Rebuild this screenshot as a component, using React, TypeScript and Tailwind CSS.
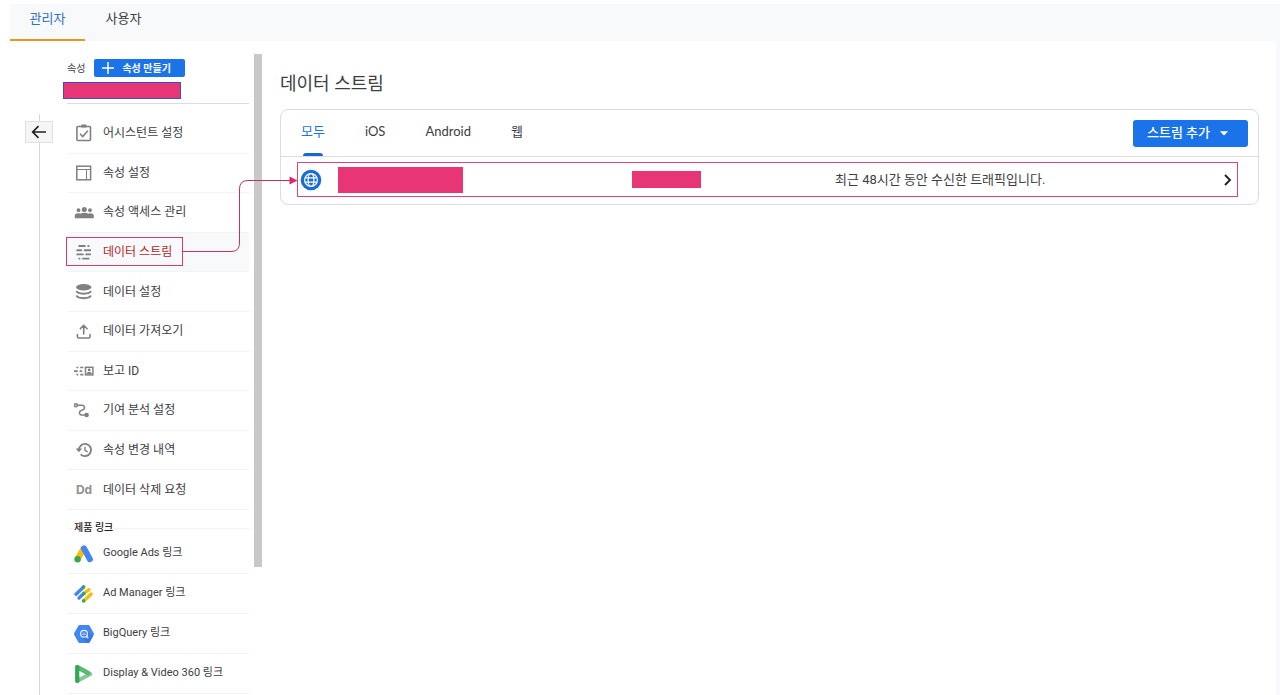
import type { ReactNode } from 'react';
import { MdArrowDropDown } from 'react-icons/md';

const icon = 'block h-5 w-5';

function AssistantIcon() {
  return (
    <svg viewBox="0 0 20 20" className={icon} fill="none" stroke="currentColor" strokeWidth="1.6">
      <rect x="2.9" y="3.5" width="13.6" height="14" rx="1" />
      <path d="M7.2 3h5.2" strokeWidth="3" />
      <path d="M6 10.8l2.7 2.7 5.2-5.7" />
    </svg>
  );
}

function LayoutIcon() {
  return (
    <svg viewBox="0 0 20 20" className={icon} fill="none" stroke="currentColor">
      <rect x="2.8" y="3.2" width="13.8" height="13.6" strokeWidth="1.5" />
      <path d="M3 6.5h13.6M12.5 6.5v10.3" strokeWidth="1" />
    </svg>
  );
}

function GroupIcon() {
  return (
    <svg viewBox="0 0 20 20" className={icon} fill="currentColor">
      <circle cx="4.5" cy="8.2" r="1.9" />
      <circle cx="10.3" cy="7.4" r="2.5" />
      <circle cx="16" cy="8.2" r="1.9" />
      <path d="M.8 16.2v-2.600c0-2.100 3.400-2.800 5.400-1.900 2.200-1.200 6-1.200 8.200 0 2-.9 5.400-.2 5.400 1.900v2.600z" />
    </svg>
  );
}

function StreamIcon() {
  return (
    <svg
      viewBox="0 0 20 20"
      className={icon}
      stroke="currentColor"
      strokeWidth="1.9"
      strokeLinecap="round"
      fill="none"
    >
      <path d="M5.200 4h5.600M14.200 4h.400M3.200 8.200h4M10.600 8.200h5.600M3.200 12.400h5.600M12.200 12.400h4M5.200 16.600h.400M9 16.600h5.600" />
    </svg>
  );
}

function DatabaseIcon() {
  return (
    <svg viewBox="0 0 20 20" className={icon} fill="none" stroke="currentColor" strokeWidth="2">
      <ellipse cx="9.7" cy="5.2" rx="7.6" ry="3.2" fill="currentColor" stroke="none" />
      <path d="M2.500 9c1.300 3.500 13.100 3.500 14.400 0M2.500 13.500c1.300 3.500 13.100 3.500 14.400 0" />
    </svg>
  );
}

function UploadIcon() {
  return (
    <svg
      viewBox="0 0 20 20"
      className={icon}
      fill="none"
      stroke="currentColor"
      strokeWidth="1.6"
      strokeLinecap="round"
      strokeLinejoin="round"
    >
      <path d="M9.700 13V4.500M6.300 7.800l3.400-3.500 3.400 3.500M3.400 13.600v2.200q0 1.200 1.200 1.200h10.200q1.200 0 1.200-1.200v-2.200" />
    </svg>
  );
}

function ReportIdIcon() {
  return (
    <svg viewBox="0 0 20 20" className={icon} fill="none" stroke="currentColor" strokeWidth="1.7">
      <path d="M2.500 6.500h1.800M6.200 6.500h3.200M0 10.100h3.800M5.600 10.100h2.600M2.500 13.700h1.800M6.200 13.700h3.200" />
      <rect x="11.5" y="6.3" width="7.4" height="7.6" strokeWidth="1.5" />
      <circle cx="15.2" cy="8.9" r="1.4" fill="currentColor" stroke="none" />
      <path d="M12.600 13c0-2.900 5.200-2.900 5.200 0z" fill="currentColor" stroke="none" />
    </svg>
  );
}

function PathIcon() {
  return (
    <svg viewBox="0 0 20 20" className={icon} fill="none" stroke="currentColor" strokeWidth="1.6">
      <circle cx="1.9" cy="5.2" r="1.5" />
      <circle cx="12.6" cy="15" r="1.5" fill="currentColor" />
      <path d="M3.400 5.200h4.800a2.400 2.400 0 0 1 1.500 4.200l-3.500 1.700a2.300 2.300 0 0 0 1 3.900h4.400" />
    </svg>
  );
}

function HistoryIcon() {
  return (
    <svg viewBox="0 0 20 20" className={icon} fill="none" stroke="currentColor" strokeWidth="1.9">
      <path d="M4.900 10a6.100 6.100 0 1 1 1.800 4.300" />
      <path d="M1.600 8.600h6.600l-3.300 3.600z" fill="currentColor" stroke="none" />
      <path d="M11 6.800v3.600l2.700 1.500" strokeWidth="1.4" />
    </svg>
  );
}

function AdsIcon() {
  return (
    <svg viewBox="0 0 20 20" className={icon} fill="none" strokeLinecap="round" strokeWidth="6">
      <path d="M9.400 4.800L3.700 15" stroke="#fbbc04" />
      <path d="M10 4.400l5.900 10.800" stroke="#4285f4" />
      <circle cx="3.6" cy="15.2" r="3.2" fill="#34a853" />
    </svg>
  );
}

function AdManagerIcon() {
  return (
    <svg viewBox="0 0 20 20" className={icon} fill="none" strokeLinecap="round" strokeWidth="3.4">
      <path d="M2 10.200l7.400-7" stroke="#4285f4" />
      <path d="M5 14l5-4.700" stroke="#4285f4" />
      <path d="M10.200 9.200l4.800-3.500" stroke="#fbbc04" />
      <path d="M10.200 16.500l7-6.500" stroke="#fbbc04" />
      <circle cx="9.6" cy="2.9" r="1.8" fill="#34a853" stroke="none" />
      <circle cx="9.9" cy="9.6" r="1.8" fill="#34a853" stroke="none" />
      <circle cx="9.6" cy="16.9" r="1.8" fill="#34a853" stroke="none" />
    </svg>
  );
}

function BigQueryIcon() {
  return (
    <svg viewBox="0 0 20 20" className={icon} fill="none">
      <path
        d="M5.600 1h8.800q.800 0 1.200.700l4.200 7.500q.400.800 0 1.600l-4.200 7.500q-.400.700-1.200.700H5.600q-.800 0-1.200-.700L.200 10.800q-.400-.800 0-1.600l4.200-7.500Q4.800 1 5.600 1z"
        fill="#4285f4"
      />
      <path d="M13.500 8L19 12.200l-3.600 6.100q-.4.700-1.200.7h-1.500L8 13.500z" fill="#3b78e0" />
      <circle cx="10" cy="9.7" r="3.4" stroke="#e8f0fe" strokeWidth="1.2" />
      <path d="M12.400 12.100l1.800 1.800" stroke="#e8f0fe" strokeWidth="1.5" />
      <path d="M8.800 9.700v1.300M10.100 8.500v2.700M11.400 10.100v.900" stroke="#e8f0fe" strokeWidth=".8" />
    </svg>
  );
}

function DisplayVideoIcon() {
  return (
    <svg viewBox="0 0 20 20" className={icon} fill="none" strokeLinejoin="round" strokeLinecap="round">
      <path d="M3.200 3l13 7-13 7z" stroke="#81c995" strokeWidth="4" />
      <path d="M3.400 3.200L14 9" stroke="#5bb974" strokeWidth="4.4" />
      <path d="M3.300 3v14" stroke="#34a853" strokeWidth="4.2" />
      <path d="M5.600 7.400l4.600 2.600-4.600 2.600z" fill="#fff" />
    </svg>
  );
}

function GlobeIcon() {
  return (
    <svg viewBox="0 0 22 22" className="block h-[22px] w-[22px]" fill="none" stroke="#fff" strokeWidth="1.2">
      <circle cx="11" cy="11" r="10.3" fill="#1a6dd8" stroke="none" />
      <circle cx="11" cy="11" r="6.4" />
      <ellipse cx="11" cy="11" rx="2.9" ry="6.4" />
      <path d="M5.200 8.800h11.600M5.200 13.200h11.600" />
    </svg>
  );
}

type Item = { label: string; glyph: ReactNode; selected?: boolean };

const settings: Item[] = [
  { label: '어시스턴트 설정', glyph: <AssistantIcon /> },
  { label: '속성 설정', glyph: <LayoutIcon /> },
  { label: '속성 액세스 관리', glyph: <GroupIcon /> },
  { label: '데이터 스트림', glyph: <StreamIcon />, selected: true },
  { label: '데이터 설정', glyph: <DatabaseIcon /> },
  { label: '데이터 가져오기', glyph: <UploadIcon /> },
  { label: '보고 ID', glyph: <ReportIdIcon /> },
  { label: '기여 분석 설정', glyph: <PathIcon /> },
  { label: '속성 변경 내역', glyph: <HistoryIcon /> },
  {
    label: '데이터 삭제 요청',
    glyph: <span className="font-['Inter'] text-xs font-bold text-[#909090]">Dd</span>,
  },
];

const productLinks: Item[] = [
  { label: 'Google Ads 링크', glyph: <AdsIcon /> },
  { label: 'Ad Manager 링크', glyph: <AdManagerIcon /> },
  { label: 'BigQuery 링크', glyph: <BigQueryIcon /> },
  { label: 'Display & Video 360 링크', glyph: <DisplayVideoIcon /> },
];

function MenuItem({ label, glyph, selected }: Item) {
  return (
    <li className={selected ? 'relative border-b border-[#f1f3f4] bg-[#f8f9fa]' : 'border-b border-[#f1f3f4]'}>
      <a href="#" className="flex h-full items-center gap-[9px] pl-[6px]">
        <span className="flex h-5 w-5 shrink-0 items-center justify-center text-[#808080]">{glyph}</span>
        <span className={selected ? 'text-[#b3261e]' : ''}>{label}</span>
      </a>
      {selected && <span className="absolute top-1 -left-[2px] h-[29px] w-[117px] border border-[#d63a6e]" />}
    </li>
  );
}

const tabs = ['모두', 'iOS', 'Android', '웹'];

export default function App() {
  return (
    <div className="relative flex min-h-screen flex-col bg-white pt-1 pl-[10px] font-['Roboto','Noto_Sans_CJK_KR',sans-serif] text-[#3c4043]">
      <header className="flex h-[37px] shrink-0 bg-[#f8f9fa] text-[13px]">
        <button className="w-[75px] border-b-2 border-[#e8961e] pb-[6px] text-[#3072c4]">관리자</button>
        <button className="w-[77px] pb-2">사용자</button>
      </header>

      <div className="flex flex-1 border-r-4 border-[#f8f9fa]">
        <div className="flex w-[53px] shrink-0 flex-col pt-[73px] pl-[15px]">
          <div className="relative flex-1">
            <div className="ml-[14px] h-full w-px bg-[#d5d7da]" />
            <button
              aria-label="뒤로"
              className="absolute top-[7px] left-0 flex h-[22px] w-[28px] items-center justify-center border border-[#e0e0e0] bg-[#f5f5f5]"
            >
              <svg viewBox="0 0 16 16" className="h-4 w-4" fill="none" stroke="#202124" strokeWidth="1.7">
                <path d="M15 8H2M7.500 2.200L1.700 8l5.800 5.800" />
              </svg>
            </button>
          </div>
        </div>

        <nav className="w-[186px] shrink-0 pt-[18px]">
          <div className="flex h-[18px] items-center gap-[9px] pl-1 text-[10px]">
            <span>속성</span>
            <button className="flex h-[18px] w-[91px] items-center gap-2 rounded-[2px] bg-[#1a73e8] pl-2 font-bold text-white">
              <svg viewBox="0 0 12 12" className="h-3 w-3" stroke="currentColor" strokeWidth="1.5">
                <path d="M6 0v12M0 6h12" />
              </svg>
              <span className="whitespace-nowrap">속성 만들기</span>
            </button>
          </div>
          <div className="mt-[5px] h-[17px] w-[118px] border border-[#3b4fc4] bg-[#e83576]" />
          <div className="mt-1 ml-1 border-b border-[#dadce0]" />

          <ul className="mt-[10px] ml-[5px] grid h-[396px] auto-rows-fr text-xs">
            {settings.map((item) => (
              <MenuItem key={item.label} {...item} />
            ))}
          </ul>
          <h2 className="ml-[5px] flex h-6 items-center pt-3 text-[10px] leading-3 font-medium text-[#202124]">
            <span className="w-[6px] border-t border-[#f1f3f4]" />
            <span>제품 링크</span>
            <span className="flex-1 border-t border-[#f1f3f4]" />
          </h2>
          <ul className="ml-[5px] grid h-[160px] auto-rows-fr text-[11px]">
            {productLinks.map((item) => (
              <MenuItem key={item.label} {...item} />
            ))}
          </ul>
        </nav>

        <div className="mt-[13px] ml-[5px] h-[513px] w-2 shrink-0 bg-[#c8c8c8]" />

        <main className="min-w-0 flex-1 pt-[29px] pr-[17px] pl-[18px]">
          <h1 className="text-lg leading-7">데이터 스트림</h1>
          <section className="mt-[11px] rounded-lg border border-[#dadce0]">
            <div className="flex h-[47px] items-center justify-between border-b border-[#dadce0] pr-[10px] pl-5">
              <div
                className="flex h-full gap-10 font-['Lato','Noto_Sans_CJK_KR',sans-serif] text-[13px]"
                role="tablist"
              >
                {tabs.map((tab, i) => (
                  <button
                    key={tab}
                    role="tab"
                    aria-selected={i === 0}
                    className={
                      i === 0
                        ? 'flex h-full flex-col items-center justify-between pt-3 text-[#1a73e8]'
                        : 'flex h-full flex-col items-center pt-3'
                    }
                  >
                    {tab}
                    {i === 0 && <span className="h-[3px] w-5 rounded-t-sm bg-[#1967d2]" />}
                  </button>
                ))}
              </div>
              <button className="flex h-[27px] items-center gap-1 rounded-[3px] bg-[#1a73e8] px-[14px] text-[13px] font-medium text-white">
                <span>스트림 추가</span>
                <MdArrowDropDown className="h-5 w-5" />
              </button>
            </div>
            <a
              href="#"
              className="mt-[5px] mr-5 mb-[7px] ml-4 grid h-[35px] grid-cols-[40px_294fr_203fr_382fr_20px] items-center border border-[#d9467a] text-[13px]"
            >
              <span className="pl-[2px]">
                <GlobeIcon />
              </span>
              <span className="h-[26px] w-[125px] bg-[#e83576]" />
              <span className="h-[17px] w-[69px] bg-[#e83576]" />
              <span className="whitespace-nowrap">최근 48시간 동안 수신한 트래픽입니다.</span>
              <svg viewBox="0 0 20 20" className="h-5 w-5" fill="none" stroke="#202124" strokeWidth="1.9">
                <path d="M8 5l5 5-5 5" />
              </svg>
            </a>
          </section>
        </main>
      </div>

      <svg
        viewBox="0 0 116 84"
        className="pointer-events-none absolute top-[174px] left-[182px] h-[84px] w-[116px]"
        fill="none"
      >
        <path d="M0 77.500h49q8.500 0 8.500-8.500V15q0-8.500 8.500-8.500h42" stroke="#c2306c" />
        <path d="M107.500 2.500l8 4-8 4z" fill="#e0246c" />
      </svg>
    </div>
  );
}
